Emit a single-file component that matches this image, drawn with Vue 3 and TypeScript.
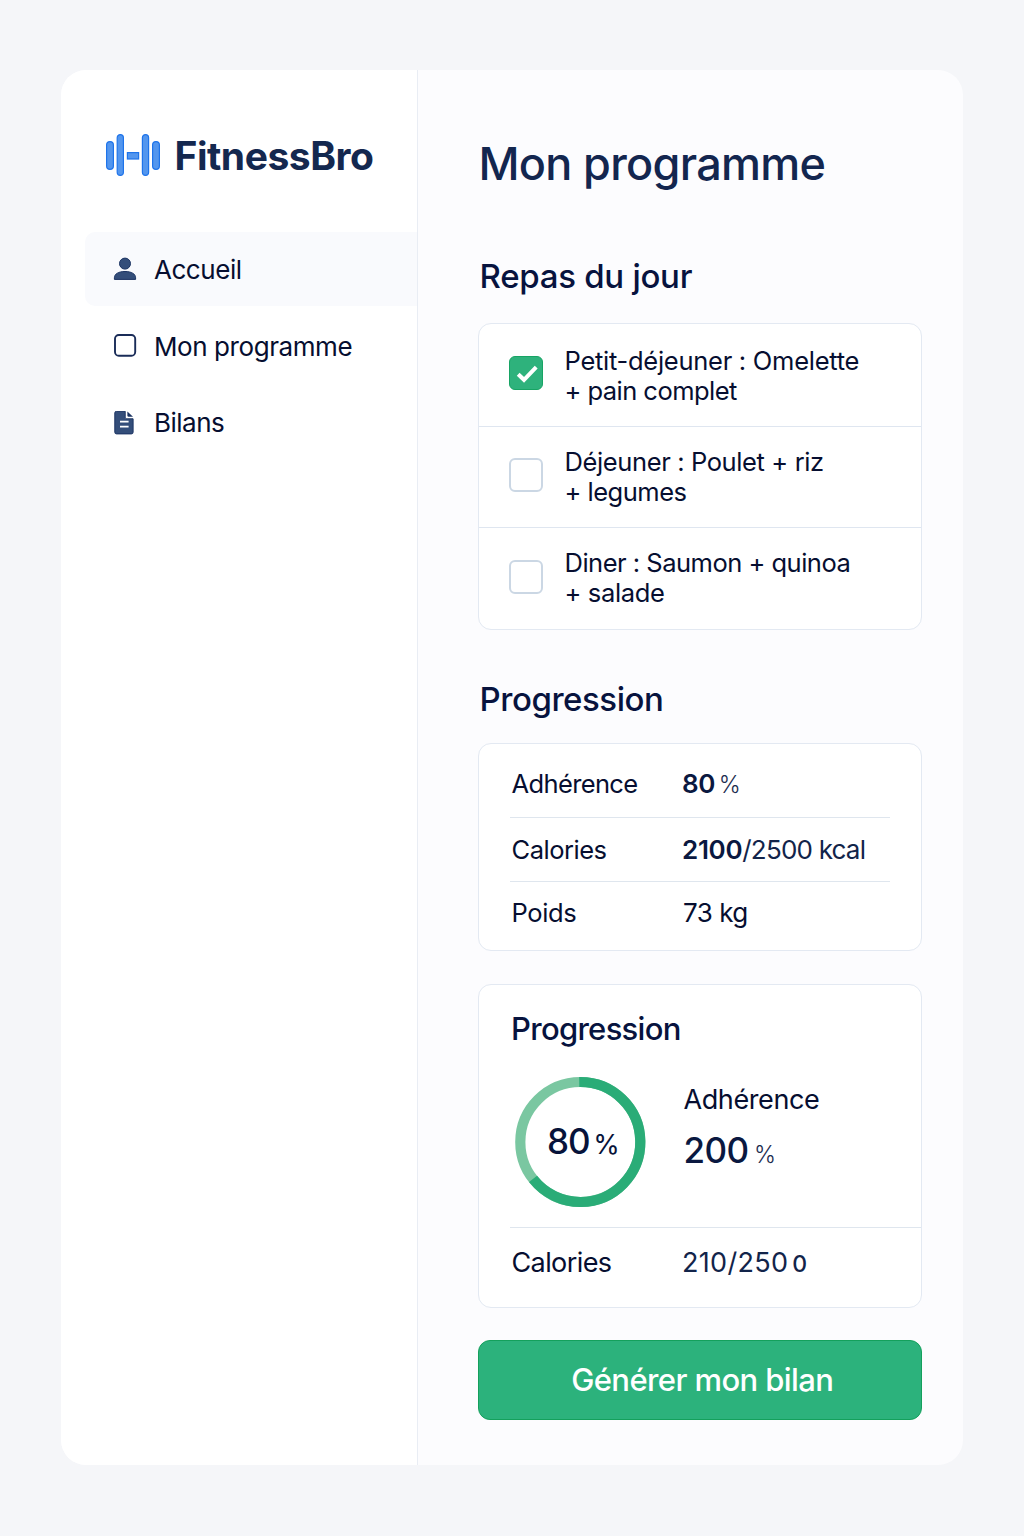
<script setup lang="ts">
import { ref } from 'vue'

interface Line {
  text: string
  tracking: number
}
interface Meal {
  id: number
  done: boolean
  lines: Line[]
}

const meals = ref<Meal[]>([
  {
    id: 1,
    done: true,
    lines: [
      { text: 'Petit-déjeuner : Omelette', tracking: -0.27 },
      { text: '+ pain complet', tracking: -0.54 },
    ],
  },
  {
    id: 2,
    done: false,
    lines: [
      { text: 'Déjeuner : Poulet + riz', tracking: -0.38 },
      { text: '+ legumes', tracking: -0.5 },
    ],
  },
  {
    id: 3,
    done: false,
    lines: [
      { text: 'Diner : Saumon + quinoa', tracking: -0.5 },
      { text: '+ salade', tracking: -0.36 },
    ],
  },
])

const ringCircumference = 2 * Math.PI * 60
const ringShare = 0.646
</script>

<template>
  <div class="page">
    <div class="shell">
      <aside class="sidebar">
        <div class="brand">
          <svg class="brand-mark" width="56" height="44" viewBox="0 0 56 44">
            <g fill="#5396ee" stroke="#1f74ea" stroke-width="1.2">
              <rect x="1.6" y="8.6" width="6.8" height="27.8" rx="3.4" />
              <rect x="12.2" y="1.6" width="6.2" height="40.8" rx="3.1" />
              <rect x="22.4" y="19.6" width="11.2" height="6.4" />
              <rect x="37.4" y="1.6" width="6.2" height="40.800" rx="3.1" />
              <rect x="47.6" y="8.6" width="6.8" height="27.8" rx="3.4" />
            </g>
          </svg>
          <span class="brand-name">FitnessBro</span>
        </div>
        <nav class="nav">
          <a class="nav-item active">
            <svg width="24" height="24" viewBox="0 0 24 24">
              <g fill="#344e7a" stroke="#1c3463" stroke-width="1">
                <circle cx="12" cy="6.6" r="5.5" />
                <path d="M1.4 22.4v-1.6c0-3.9 4.2-6.3 10.6-6.3s10.6 2.4 10.6 6.3v1.6z" />
              </g>
            </svg>
            <span class="t-accueil">Accueil</span>
          </a>
          <a class="nav-item">
            <svg width="24" height="24" viewBox="0 0 24 24">
              <rect x="2" y="1" width="20.200" height="20.800" rx="3.800" fill="#fff" stroke="#1a2c58" stroke-width="1.900" />
            </svg>
            <span class="t-programme">Mon programme</span>
          </a>
          <a class="nav-item">
            <svg width="24" height="24" viewBox="0 0 24 24">
              <g transform="translate(.6 -.2)">
                <path d="M2.900.5h8.700v5.600c0 1.200.7 1.900 1.900 1.900h6v13.400a1.700 1.700 0 0 1-1.700 1.700H2.900a1.700 1.700 0 0 1-1.700-1.700V2.200A1.700 1.700 0 0 1 2.900.500z" fill="#344e7a" stroke="#1c3463" stroke-width="1" />
                <path d="M13.800.600L19.400 5.900h-4.400a1.200 1.200 0 0 1-1.200-1.200z" fill="#1c3463" />
                <path d="M6.400 10.800h8.600M6.400 15.800h8.600" stroke="#fff" stroke-width="1.900" fill="none" />
              </g>
            </svg>
            <span class="t-bilans">Bilans</span>
          </a>
        </nav>
      </aside>

      <main class="main">
        <h1>Mon programme</h1>

        <h2 class="t-meals">Repas du jour</h2>
        <ul class="card meals">
          <li v-for="meal in meals" :key="meal.id" class="meal">
            <button
              type="button"
              class="check"
              :class="{ done: meal.done }"
              :aria-label="meal.lines[0].text"
              @click="meal.done = !meal.done"
            >
              <svg v-if="meal.done" width="32" height="32" viewBox="0 0 32 32">
                <path d="M8.200 17.200L14 22.800 26.200 10.200" fill="none" stroke="#fff" stroke-width="4" />
              </svg>
            </button>
            <div class="meal-text">
              <div v-for="line in meal.lines" :key="line.text" :style="{ letterSpacing: line.tracking + 'px' }">{{ line.text }}</div>
            </div>
          </li>
        </ul>

        <h2 class="t-progress">Progression</h2>
        <div class="card stats">
          <div class="stat">
            <span class="label t-adherence">Adhérence</span>
            <span class="value"><b class="t-80">80</b><small class="pct">%</small></span>
          </div>
          <div class="stat">
            <span class="label t-calories">Calories</span>
            <span class="value"><b class="t-2100">2100</b><span class="kcal">/2500 kcal</span></span>
          </div>
          <div class="stat">
            <span class="label t-poids">Poids</span>
            <span class="value kg">73 kg</span>
          </div>
        </div>

        <div class="card summary">
          <h3>Progression</h3>
          <div class="summary-body">
            <div class="ring">
              <svg width="132" height="132" viewBox="0 0 132 132">
                <circle cx="66.300" cy="66" r="60" fill="none" stroke="#7ac7a1" stroke-width="10.200" />
                <circle
                  cx="66.300"
                  cy="66"
                  r="60"
                  fill="none"
                  stroke="#2aac77"
                  stroke-width="10.200"
                  :stroke-dasharray="`${ringCircumference * ringShare} ${ringCircumference}`"
                  transform="rotate(-91 66.300 66)"
                />
              </svg>
              <div class="ring-text"><span class="ring-num">80</span><span class="ring-pct">%</span></div>
            </div>
            <div class="summary-side">
              <div class="side-label">Adhérence</div>
              <div class="side-value"><span class="side-num">200</span><small class="pct">%</small></div>
            </div>
          </div>
          <div class="summary-foot">
            <span class="label">Calories</span>
            <span class="foot-value">210/250<span class="foot-zero">0</span></span>
          </div>
        </div>

        <button type="button" class="cta">Générer mon bilan</button>
      </main>
    </div>
  </div>
</template>

<style>
body {
  background: #f5f6f9;
}
</style>

<style scoped>
* {
  box-sizing: border-box;
}
.page {
  width: 1024px;
  height: 1536px;
  padding: 70px 61px 71px;
  background: #f5f6f9;
  font-family: Inter, 'Liberation Sans', sans-serif;
  color: #060e30;
}
.shell {
  display: flex;
  height: 1395px;
  border-radius: 25px;
  overflow: hidden;
  background: #fcfcfe;
}
.sidebar {
  width: 357px;
  flex: none;
  padding-top: 62px;
  background: #fff;
  border-right: 1px solid #e9edf4;
}
.brand {
  display: flex;
  align-items: center;
  height: 48px;
  padding-left: 44px;
}
.brand-mark {
  flex: none;
  margin-bottom: 2px;
}
.brand-name {
  margin-left: 13.500px;
  font-size: 39px;
  line-height: 48px;
  font-weight: 700;
  letter-spacing: -0.46px;
  color: #14284f;
}
.nav {
  display: flex;
  flex-direction: column;
  gap: 3px;
  margin-top: 52px;
  padding-left: 24px;
}
.nav-item {
  display: flex;
  align-items: center;
  gap: 17px;
  height: 74px;
  padding-left: 28px;
  font-size: 26px;
  line-height: 32px;
}
.nav-item svg {
  flex: none;
  margin-top: -1px;
}
.nav-item.active {
  background: #f9fafd;
  border-radius: 10px 0 0 10px;
}
.t-accueil {
  letter-spacing: -0.46px;
  padding-top: 2px;
}
.t-programme {
  letter-spacing: -0.42px;
  padding-top: 2px;
}
.t-bilans {
  letter-spacing: -0.51px;
}
.main {
  flex: 1;
  padding: 66px 41px 0 60px;
}
h1 {
  margin: 0 0 64px 0.500px;
  font-size: 45px;
  line-height: 56px;
  font-weight: 450;
  letter-spacing: -0.7px;
  color: #13264f;
}
h2 {
  margin: 0 0 0 1.500px;
  font-size: 33px;
  line-height: 40px;
  font-weight: 500;
  color: #07133e;
}
.t-meals {
  letter-spacing: -0.28px;
}
.t-progress {
  margin-top: 49px;
  letter-spacing: -0.45px;
}
.card {
  background: #fff;
  border: 1px solid #e3e9f2;
  border-radius: 13px;
}
.meals {
  list-style: none;
  margin: 27px 0 0;
  padding: 0;
}
.meal {
  display: flex;
  align-items: center;
  height: 101px;
  padding-left: 30px;
}
.meal:first-child {
  height: 103px;
}
.meal:not(:last-child) {
  border-bottom: 1px solid #dfe6f0;
}
.check {
  width: 34px;
  height: 34px;
  flex: none;
  display: flex;
  align-items: center;
  justify-content: center;
  margin: -4px 0 0;
  padding: 0;
  border: 2px solid #cbd7e4;
  border-radius: 6px;
  background: #fff;
}
.check.done {
  border: 1px solid #17a464;
  background: #2eb27c;
  margin-top: -5px;
}
.meal-text {
  margin: -1px 0 0 21.500px;
  font-size: 25.500px;
  line-height: 30px;
  white-space: nowrap;
}
.meal:first-child .meal-text {
  margin-top: 1px;
}
.stats {
  margin-top: 24px;
  padding: 7px 31px;
}
.stat {
  display: flex;
  align-items: center;
  height: 64px;
  font-size: 25.500px;
  line-height: 32px;
}
.stat:first-child {
  height: 67px;
}
.stat:last-child {
  height: 61px;
}
.stat:not(:last-child) {
  border-bottom: 1px solid #dfe6ee;
}
.label {
  width: 170.500px;
  flex: none;
  padding-left: 1.500px;
}
.t-adherence {
  letter-spacing: -0.63px;
}
.t-calories {
  letter-spacing: -0.48px;
}
.t-poids {
  letter-spacing: -0.35px;
}
.value {
  font-size: 26px;
  padding-left: 1.500px;
  white-space: nowrap;
}
.value b {
  font-weight: 600;
  letter-spacing: -0.3px;
  color: #0a1840;
}
.pct {
  font-size: 23.500px;
  font-weight: 300;
  color: #1c2c50;
}
.value .pct {
  margin-left: 3.500px;
}
.kcal {
  letter-spacing: -0.8px;
  color: #12244a;
}
.kg {
  padding-left: 2.500px;
  letter-spacing: -0.5px;
}
.summary {
  margin-top: 33px;
  height: 324px;
  padding-top: 25px;
}
h3 {
  margin: 0 0 0 32px;
  font-size: 31px;
  line-height: 38px;
  font-weight: 500;
  letter-spacing: -0.7px;
  color: #07133e;
}
.summary-body {
  display: flex;
  margin: 28px 0 0 35px;
  height: 151px;
}
.ring {
  display: grid;
  width: 132px;
  height: 132px;
}
.ring > * {
  grid-area: 1 / 1;
}
.ring-text {
  align-self: center;
  padding: 5px 0 0 33px;
  line-height: 40px;
  white-space: nowrap;
  color: #07133a;
}
.ring-num {
  font-size: 35px;
  font-weight: 450;
  letter-spacing: -1px;
}
.ring-pct {
  margin-left: 3.500px;
  font-size: 27px;
}
.summary-side {
  margin-left: 37.500px;
  padding-top: 8px;
}
.side-label {
  font-size: 27px;
  line-height: 32px;
  letter-spacing: -0.4px;
}
.side-value {
  margin-top: 13px;
  line-height: 42px;
}
.side-num {
  font-size: 35px;
  font-weight: 500;
  letter-spacing: -0.580px;
  color: #0a1840;
}
.side-value .pct {
  margin-left: 5.500px;
}
.summary-foot {
  display: flex;
  align-items: center;
  margin-left: 31px;
  height: 80px;
  padding-bottom: 9px;
  border-top: 1px solid #dfe6ee;
  font-size: 27px;
  line-height: 32px;
}
.summary-foot .label {
  letter-spacing: -0.6px;
}
.foot-value {
  padding-left: 1.500px;
  letter-spacing: 0.3px;
  color: #12244a;
}
.foot-zero {
  margin-left: 4px;
  font-size: 23px;
  font-weight: 500;
}
.cta {
  display: block;
  width: 100%;
  height: 80px;
  margin: 32px 0 0;
  padding: 0 0 0 4.500px;
  border: 1px solid #14a05c;
  border-radius: 12px;
  background: #2cb27c;
  color: #fff;
  font-family: inherit;
  font-size: 31px;
  font-weight: 500;
  line-height: 38px;
  letter-spacing: -0.6px;
}
</style>
